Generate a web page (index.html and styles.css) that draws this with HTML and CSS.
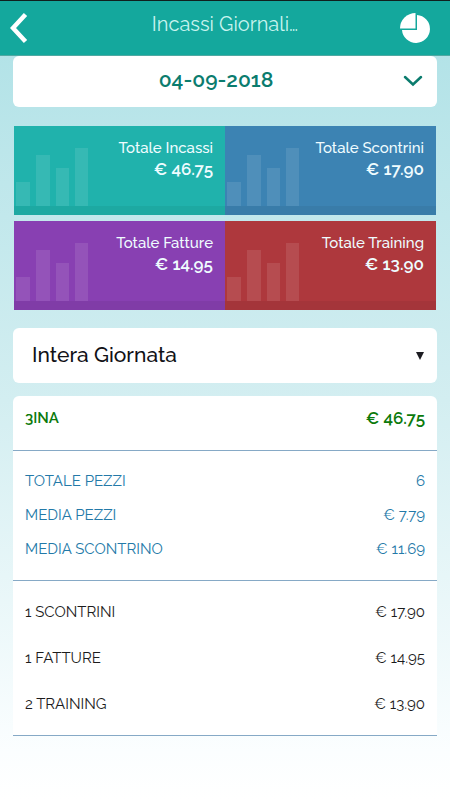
FILE: index.html
```html
<!DOCTYPE html>
<html lang="it">
<head>
<meta charset="utf-8">
<meta name="viewport" content="width=device-width, initial-scale=1">
<title>Incassi Giornalieri</title>
<link rel="stylesheet" href="styles.css">
</head>
<body>
<header class="topbar">
  <button class="icon-button" type="button" aria-label="Indietro">
    <svg width="18" height="32" viewBox="0 0 18 32"><path d="M15.500 2.500 3 16 15.500 29.500" fill="none" stroke="#fff" stroke-width="4.500"/></svg>
  </button>
  <h1 class="title">Incassi Giornali…</h1>
  <button class="icon-button" type="button" aria-label="Grafico">
    <svg width="30" height="30" viewBox="0 0 30 30" fill="#fff"><path d="M15.500 0V15.500H0A15.500 15.500 0 0 1 15.500 0Z"/><path d="M17 2A14 14 0 1 1 2 17H17Z"/></svg>
  </button>
</header>
<main class="content">
  <button class="card date" type="button">
    <span class="date-text">04-09-2018</span>
    <svg width="20" height="12" viewBox="0 0 20 12"><path d="M2 2 10 9.500 18 2" fill="none" stroke="#0b7c6e" stroke-width="2.500" stroke-linecap="round"/></svg>
  </button>
  <section class="tiles">
    <article class="tile teal">
      <svg class="bars" width="76" height="58" viewBox="0 0 76 58"><path d="M2 34h14v24H2zM22 7h14v51H22zM42 20h13v38H42zM61 0h13v58H61z"/></svg>
      <h2 class="tile-name">Totale Incassi</h2>
      <p class="tile-value">€ 46.75</p>
    </article>
    <article class="tile blue">
      <svg class="bars" width="76" height="58" viewBox="0 0 76 58"><path d="M2 34h14v24H2zM22 7h14v51H22zM42 20h13v38H42zM61 0h13v58H61z"/></svg>
      <h2 class="tile-name">Totale Scontrini</h2>
      <p class="tile-value">€ 17.90</p>
    </article>
    <article class="tile purple">
      <svg class="bars" width="76" height="58" viewBox="0 0 76 58"><path d="M2 34h14v24H2zM22 7h14v51H22zM42 20h13v38H42zM61 0h13v58H61z"/></svg>
      <h2 class="tile-name">Totale Fatture</h2>
      <p class="tile-value">€ 14.95</p>
    </article>
    <article class="tile red">
      <svg class="bars" width="76" height="58" viewBox="0 0 76 58"><path d="M2 34h14v24H2zM22 7h14v51H22zM42 20h13v38H42zM61 0h13v58H61z"/></svg>
      <h2 class="tile-name">Totale Training</h2>
      <p class="tile-value">€ 13.90</p>
    </article>
  </section>
  <div class="card period">
    <select class="period-select" aria-label="Periodo"><option>Intera Giornata</option></select>
    <svg class="period-arrow" width="8" height="8" viewBox="0 0 8 8"><path d="M0 0H8L4 8Z" fill="#1c1c22"/></svg>
  </div>
  <section class="card details">
    <dl class="group store">
      <div class="row"><dt>3INA</dt><dd>€ 46.75</dd></div>
    </dl>
    <dl class="group averages">
      <div class="row"><dt>TOTALE PEZZI</dt><dd>6</dd></div>
      <div class="row"><dt>MEDIA PEZZI</dt><dd>€ 7.79</dd></div>
      <div class="row"><dt>MEDIA SCONTRINO</dt><dd>€ 11.69</dd></div>
    </dl>
    <dl class="group documents">
      <div class="row"><dt>1 SCONTRINI</dt><dd>€ 17.90</dd></div>
      <div class="row"><dt>1 FATTURE</dt><dd>€ 14.95</dd></div>
      <div class="row"><dt>2 TRAINING</dt><dd>€ 13.90</dd></div>
    </dl>
  </section>
</main>
</body>
</html>
```
FILE: styles.css
```css
* { box-sizing: border-box; }

body {
  margin: 0;
  min-height: 100vh;
  background: linear-gradient(#aee1e6, #d3eef1 50%, #fbfeff 94%, #fff);
  font-family: Raleway, Lato, sans-serif;
  font-variant-numeric: oldstyle-nums;
  font-size: 15px;
}

h1, h2, p, dl, dd { margin: 0; }

button, select { font: inherit; font-variant-numeric: inherit; border: 0; }

svg { display: block; }

.topbar {
  display: grid;
  grid-template-columns: 40px 1fr 40px;
  align-items: center;
  height: 56px;
  padding: 0 10px;
  border-top: 1px solid #10201e;
  border-bottom: 1px solid #4fa9a2;
  background: #14a89d;
}

.icon-button { justify-self: start; padding: 0; background: none; }

.title {
  padding-bottom: 8px;
  color: #c9f4ef;
  font-size: 20px;
  font-weight: 400;
  text-align: center;
}

.content {
  display: flex;
  flex-direction: column;
  padding: 0 13px 64px;
}

.card { border-radius: 6px; background: #fff; }

.date {
  display: flex;
  align-items: center;
  padding: 0 14px 2px 16px;
  height: 51px;
  color: #0b7c6e;
  font-size: 21px;
  font-weight: 600;
}

.date-text { flex: 1; padding-bottom: 2px; }

.tiles {
  display: grid;
  grid-template-columns: 1fr 1fr;
  row-gap: 6px;
  margin: 19px 1px 18px;
}

.tile {
  position: relative;
  height: 89px;
  padding: 12px 12px 0;
  border-bottom: 9px solid;
  color: #effcff;
  text-align: right;
}

.teal { background: #20b2ac; border-color: #1da9a2; }
.blue { background: #3c83b3; border-color: #397ca9; }
.purple { background: #8840b2; border-color: #803ca7; }
.red { background: #ae383d; border-color: #a4353a; }

.bars {
  position: absolute;
  left: 0;
  bottom: 0;
  fill: rgba(255, 255, 255, 0.1);
}

.tile-name { font-size: 15px; line-height: 20px; font-weight: 500; }

.tile-value { font-size: 17px; line-height: 22px; font-weight: 600; }

.period {
  display: grid;
  align-items: center;
  height: 55px;
  margin-bottom: 13px;
}

.period-select {
  grid-area: 1 / 1;
  height: 100%;
  padding: 0 40px 2px 19px;
  border-radius: 6px;
  background: none;
  color: #111116;
  font-size: 21px;
  font-weight: 500;
  appearance: none;
}

.period-arrow {
  grid-area: 1 / 1;
  justify-self: end;
  margin-right: 13px;
  pointer-events: none;
}

.details { border-radius: 6px 6px 0 0; }

.group { padding: 0 12px; border-bottom: 1px solid #86a9c6; }

.row {
  display: flex;
  align-items: center;
  justify-content: space-between;
}

.store { padding-top: 5px; padding-bottom: 15px; color: #0b7a0b; font-weight: 600; }
.store .row { height: 34px; }
.store dd { font-size: 17px; }

.averages { padding-top: 13px; padding-bottom: 14px; color: #2379a8; }
.averages .row { height: 34px; }

.documents { padding-top: 8px; padding-bottom: 8px; color: #1c1c1c; }
.documents .row { height: 46px; }
```
